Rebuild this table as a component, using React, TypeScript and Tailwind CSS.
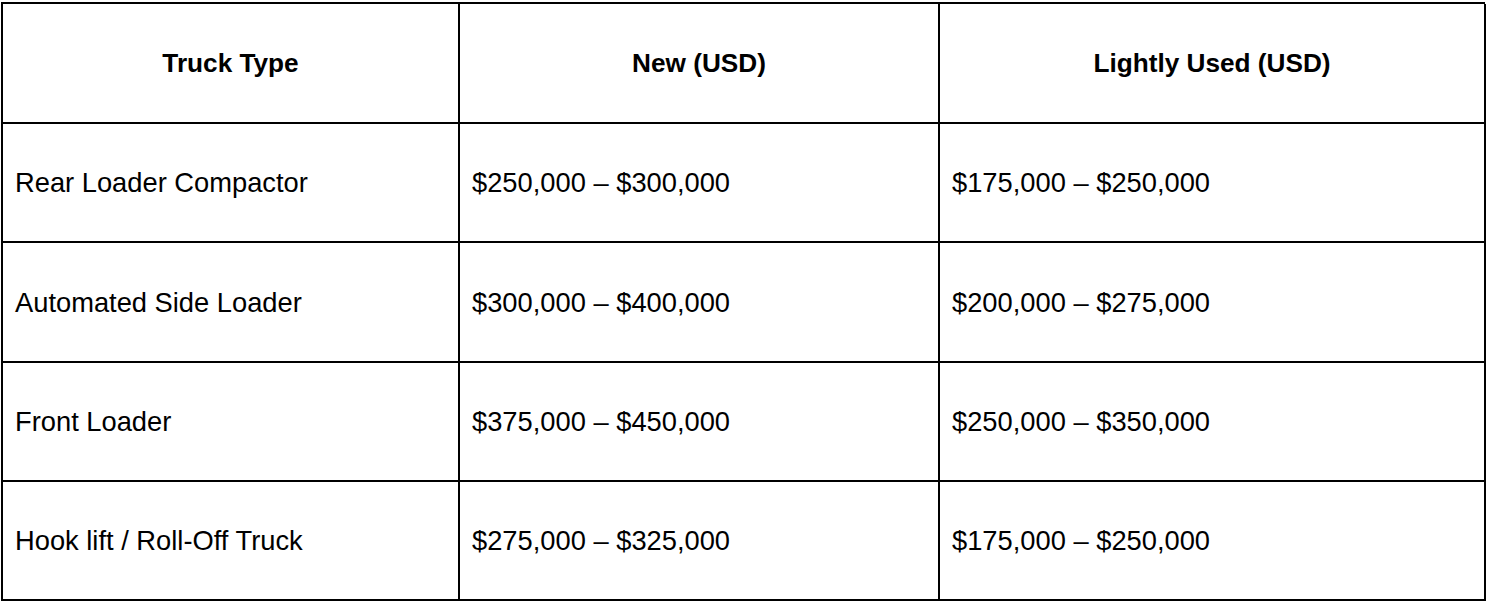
import React from "react";

const rows = [
  ["Rear Loader Compactor", "$250,000 – $300,000", "$175,000 – $250,000"],
  ["Automated Side Loader", "$300,000 – $400,000", "$200,000 – $275,000"],
  ["Front Loader", "$375,000 – $450,000", "$250,000 – $350,000"],
  ["Hook lift / Roll-Off Truck", "$275,000 – $325,000", "$175,000 – $250,000"],
];

const headers = ["Truck Type", "New (USD)", "Lightly Used (USD)"];

const App: React.FC = () => {
  return (
    <div className="w-[1487px] h-[604px] bg-white pl-[1px] pt-[2px] font-['Liberation_Sans',Arial,sans-serif] text-black">
      <div className="grid grid-cols-[457px_480px_546px] grid-rows-[120px_119px_120px_119px_119px] w-[1484px] border-l-2 border-t-2 border-black">
        {headers.map((h) => (
          <div
            key={h}
            className="flex items-center justify-center pt-[2px] border-r-2 border-b-2 border-black text-[26.2px] font-bold"
          >
            {h}
          </div>
        ))}
        {rows.map((row) =>
          row.map((cell, i) => (
            <div
              key={row[0] + i}
              className="flex items-center pl-3 pt-[2px] border-r-2 border-b-2 border-black text-[27.3px]"
            >
              {cell}
            </div>
          ))
        )}
      </div>
    </div>
  );
};

export default App;
